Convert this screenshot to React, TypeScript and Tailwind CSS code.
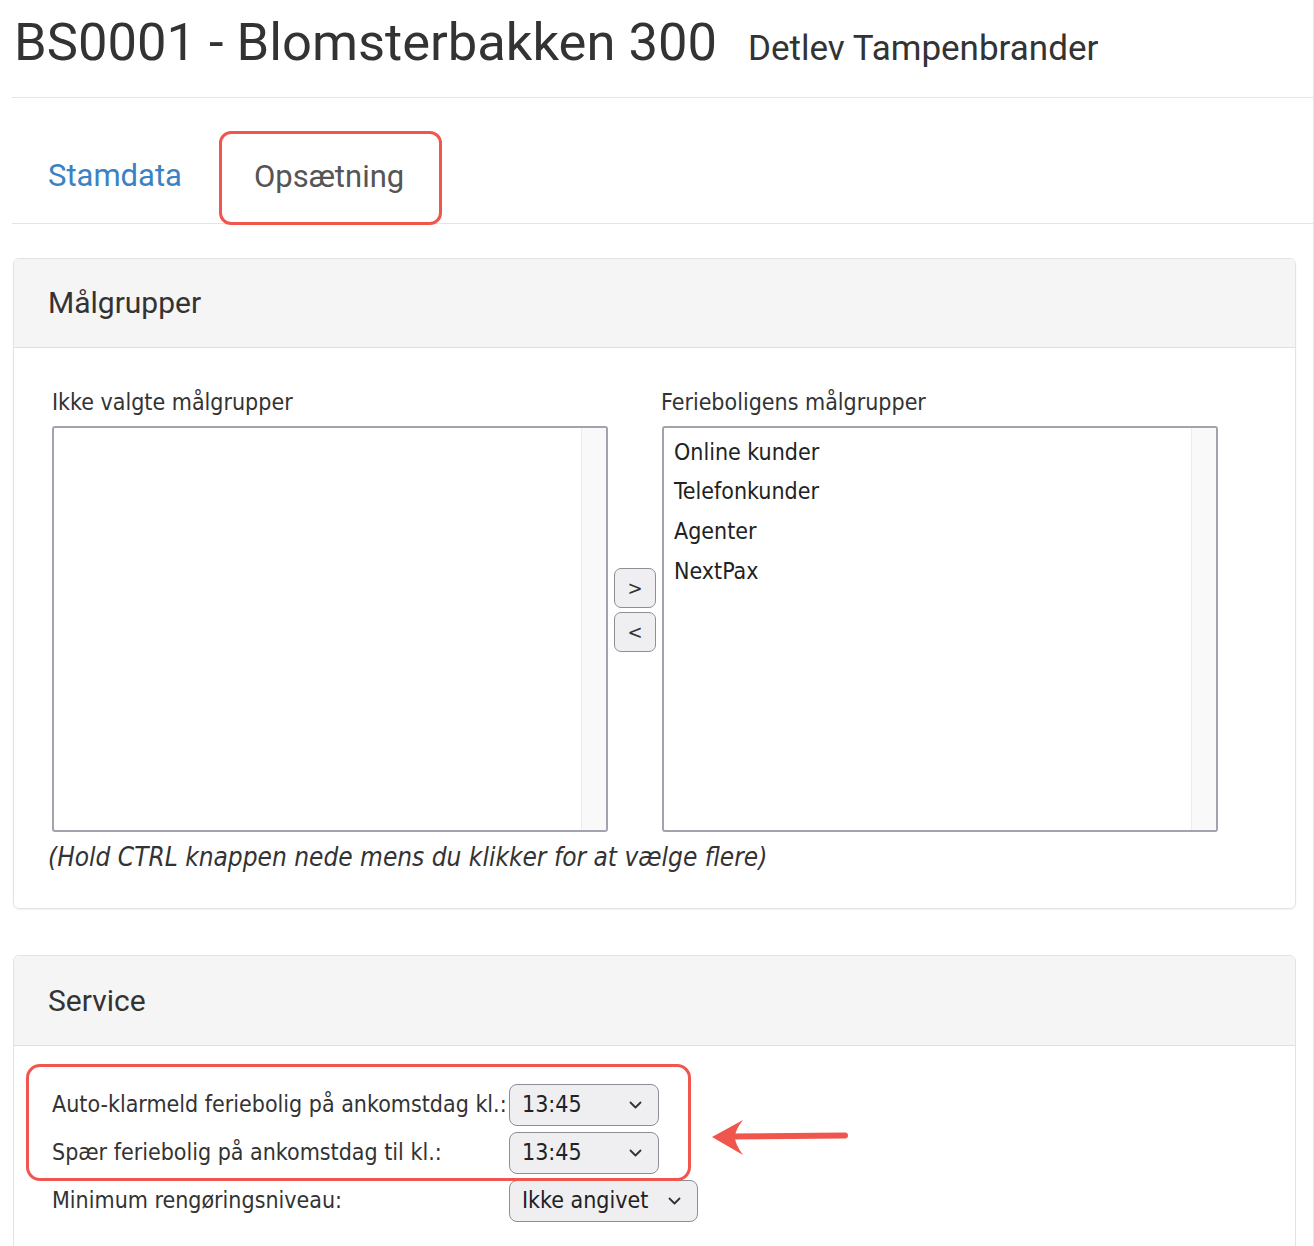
import React from "react";

const verdana = "font-['DejaVu_Sans_Condensed','DejaVu_Sans',sans-serif]";
const roboto = "font-['Roboto','Liberation_Sans',sans-serif]";

const chosen = ["Online kunder", "Telefonkunder", "Agenter", "NextPax"];

function Chevron() {
  return (
    <svg width="13" height="8" viewBox="0 0 13 8" fill="none">
      <path d="M1.5 1.5 L6.5 6.5 L11.5 1.5" stroke="#333" strokeWidth="1.8" strokeLinecap="round" strokeLinejoin="round" />
    </svg>
  );
}

function FakeSelect({ value, width }: { value: string; width: string }) {
  return (
    <div
      className={`flex h-[42px] items-center justify-between rounded-[8px] border-[1.5px] border-[#8e8e96] bg-[#efeff2] pl-[12px] pr-[16px] text-[23px] text-[#222] ${width}`}
    >
      <span>{value}</span>
      <Chevron />
    </div>
  );
}

function ListBox({ items }: { items: string[] }) {
  return (
    <div className="flex h-[406px] w-[556px] rounded-[3px] border-2 border-[#a3a3ad] bg-white">
      <div className="flex-1 pl-[10px] pt-[5px]">
        {items.map((item) => (
          <div key={item} className="h-[39.7px] text-[23px] leading-[39.7px] text-[#222]">
            {item}
          </div>
        ))}
      </div>
      <div className="w-[25px] border-l border-[#ececec] bg-[#f9f9f9]" />
    </div>
  );
}

function MoveButton({ label }: { label: string }) {
  return (
    <button className="flex h-[40px] w-[42px] items-center justify-center rounded-[7px] border-[1.5px] border-[#8e8e96] bg-[#efeff2] text-[20px] text-[#333]">
      {label}
    </button>
  );
}

export default function App() {
  return (
    <div className="ml-[12px] min-h-[1246px] w-[1302px] border-r border-[#e6e6e6] bg-white text-[#333]">
      <div className={`flex items-baseline border-b border-[#e5e5e5] pb-[21px] pt-[12px] ${roboto}`}>
        <h1 className="pl-[2px] text-[52.5px] leading-[60px] text-[#333]">BS0001 - Blomsterbakken 300</h1>
        <span className="ml-[31px] text-[35px] text-[#333]">Detlev Tampenbrander</span>
      </div>

      <div className={`flex items-center border-b border-[#e5e5e5] pt-[33px] ${roboto}`}>
        <span className="ml-[36px] text-[31px] text-[#3b82c4]">Stamdata</span>
        <div className="-mb-[2px] ml-[37px] flex h-[94px] w-[223px] items-center rounded-[12px] border-[3px] border-[#f0564e] pl-[32px]">
          <span className="text-[31px] text-[#555]">Opsætning</span>
        </div>
      </div>

      <section className="ml-px mr-[17px] mt-[34px] overflow-hidden rounded-[6px] border border-[#e3e3e3] shadow-[0_1px_2px_rgba(0,0,0,0.05)]">
        <div className={`flex h-[89px] items-center border-b border-[#e0e0e0] bg-[#f5f5f5] pl-[34px] text-[30px] ${roboto}`}>
          Målgrupper
        </div>
        <div className={`pb-[37px] pl-[38px] pt-[41px] ${verdana}`}>
          <div className="flex">
            <div className="flex flex-col">
              <div className="mb-[11px] text-[23px] leading-[26px]">Ikke valgte målgrupper</div>
              <ListBox items={[]} />
            </div>
            <div className="mx-[6px] mt-[179px] flex flex-col gap-[4px]">
              <MoveButton label=">" />
              <MoveButton label="<" />
            </div>
            <div className="flex flex-col">
              <div className="mb-[11px] -ml-px text-[23px] leading-[26px]">Ferieboligens målgrupper</div>
              <ListBox items={chosen} />
            </div>
          </div>
          <p className="-ml-[4px] mt-[11px] text-[26px] italic leading-[28px]">
            (Hold CTRL knappen nede mens du klikker for at vælge flere)
          </p>
        </div>
      </section>

      <section className="ml-px mr-[17px] mt-[46px] rounded-[6px] border border-[#e3e3e3]">
        <div className={`flex h-[90px] items-center rounded-t-[6px] border-b border-[#e0e0e0] bg-[#f5f5f5] pl-[34px] text-[30px] ${roboto}`}>
          Service
        </div>
        <div className={`relative pb-[40px] pl-[38px] pt-[38px] ${verdana}`}>
          <div className="grid grid-cols-[457px_auto] items-center gap-y-[6px] text-[23px]">
            <span>Auto-klarmeld feriebolig på ankomstdag kl.:</span>
            <FakeSelect value="13:45" width="w-[150px]" />
            <span>Spær feriebolig på ankomstdag til kl.:</span>
            <FakeSelect value="13:45" width="w-[150px]" />
            <span>Minimum rengøringsniveau:</span>
            <FakeSelect value="Ikke angivet" width="w-[189px]" />
          </div>

          <div className="pointer-events-none absolute left-[12px] top-[18px] h-[117px] w-[665px] rounded-[14px] border-[3px] border-[#f0564e]" />
          <svg
            className="pointer-events-none absolute left-[692px] top-[68px]"
            width="148"
            height="46"
            viewBox="0 0 148 46"
          >
            <path d="M6 23 L37 6 Q29 16 29 23 Q29 30 37 41 Z" fill="#f0564e" />
            <line x1="26" y1="22.5" x2="139" y2="21.5" stroke="#f0564e" strokeWidth="6" strokeLinecap="round" />
          </svg>
        </div>
      </section>
    </div>
  );
}
